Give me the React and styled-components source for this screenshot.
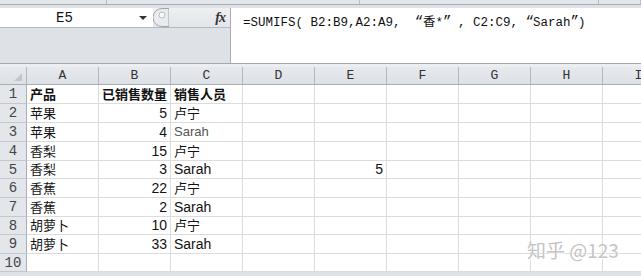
import React from "react";
import styled, { createGlobalStyle } from "styled-components";

const GlobalStyle = createGlobalStyle`
  html, body {
    margin: 0;
    padding: 0;
    background: #ffffff;
    overflow: hidden;
  }
`;

const CJK = `"Noto Sans CJK SC", "Liberation Sans", sans-serif`;
const MONO = `"Liberation Mono", "Noto Sans CJK SC", monospace`;

const Page = styled.div`
  width: 641px;
  height: 276px;
  position: relative;
  overflow: hidden;
  background: #dee1e6;
`;

const TopStrip = styled.div`
  display: flex;
  height: 4px;
  background: #e3e6ea;
  border-bottom: 1px solid #a9aeb6;
`;

const StripCell = styled.div`
  width: ${(p) => p.w}px;
  flex: ${(p) => (p.w ? "none" : 1)};
  border-right: 1px solid #b9bec5;
`;

const FormulaBar = styled.div`
  display: flex;
  padding-top: 3px;
  height: 55px;
  background: #dee1e6;
  border-bottom: 1px solid #a3a8b0;
`;

const LeftPane = styled.div`
  width: 230px;
  display: flex;
  flex-direction: column;
`;

const NameRow = styled.div`
  display: flex;
  height: 19px;
  border-bottom: 1px solid #b4b9c0;
`;

const NameBox = styled.div`
  width: 153px;
  background: #ffffff;
  display: flex;
  align-items: center;
`;

const NameText = styled.span`
  flex: 1;
  text-align: center;
  font-family: ${MONO};
  font-size: 14px;
  color: #111;
  padding-right: 10px;
`;

const Caret = styled.span`
  width: 0;
  height: 0;
  border-left: 4px solid transparent;
  border-right: 4px solid transparent;
  border-top: 4px solid #333;
  margin-right: 6px;
`;

const FxArea = styled.div`
  flex: 1;
  display: flex;
  align-items: center;
  justify-content: space-between;
  background: linear-gradient(#eef0f2, #e2e5e9);
  padding-right: 5px;
`;

const Fx = styled.span`
  font-family: "Liberation Serif", serif;
  font-style: italic;
  font-weight: bold;
  font-size: 14px;
  color: #333;
  letter-spacing: -1px;
`;

const FormulaInput = styled.div`
  flex: 1;
  background: #ffffff;
  border-left: 1px solid #a9aeb6;
  padding: 3px 0 0 12px;
  font-family: ${MONO};
  font-size: 12.5px;
  color: #111;
  white-space: pre;
  height: 52px;
`;

const Quote = styled.span`
  display: inline-block;
  width: ${(p) => (p.$wide ? 15 : 7.5)}px;
  font-family: "Liberation Mono", monospace;
  font-size: 14px;
  text-align: ${(p) => (p.$open ? "right" : "left")};
`;

const Gap = styled.div`
  height: 3px;
  background: #eceef1;
`;

const Grid = styled.div`
  display: grid;
  grid-template-columns: 27px repeat(9, 72px);
  grid-template-rows: 18px;
  grid-auto-rows: auto;
  background: #ffffff;
  font-family: ${CJK};
`;

const HeadCell = styled.div`
  box-sizing: border-box;
  height: 18px;
  background: linear-gradient(#e6e9ed, #dde1e6);
  border-right: 1px solid #b3b8bf;
  border-bottom: 1px solid #a9aeb6;
  display: flex;
  align-items: center;
  justify-content: center;
  font-family: ${MONO};
  font-size: 13px;
  color: #333;
  position: relative;
`;

const CornerMark = styled.span`
  position: absolute;
  right: 4px;
  bottom: 3px;
  width: 0;
  height: 0;
  border-left: 8px solid transparent;
  border-bottom: 8px solid #c3c7cd;
`;

const RowHead = styled.div`
  box-sizing: border-box;
  height: ${(p) => p.h}px;
  background: #e3e6ea;
  border-right: 1px solid #a9aeb6;
  border-bottom: 1px solid #c4c8ce;
  display: flex;
  align-items: center;
  justify-content: center;
  font-family: ${MONO};
  font-size: 14px;
  color: #444;
`;

const Cell = styled.div`
  box-sizing: border-box;
  height: ${(p) => p.h}px;
  border-right: 1px solid #dadcdd;
  border-bottom: 1px solid #dadcdd;
  display: flex;
  align-items: flex-end;
  justify-content: ${(p) => (p.$right ? "flex-end" : "flex-start")};
  padding: 0 3px 1px 3px;
  font-size: ${(p) => (p.$num ? 14 : 13)}px;
  line-height: 16px;
  font-family: ${(p) => (p.$num || p.$light ? `"Liberation Sans", sans-serif` : CJK)};
  font-weight: ${(p) => (p.$bold ? 700 : 400)};
  color: ${(p) => (p.$light ? "#555" : "#111")};
  white-space: nowrap;
`;

const Watermark = styled.div`
  position: absolute;
  left: 527px;
  top: 236px;
  font-family: ${CJK};
  font-size: 19px;
  color: #c4c4c4;
  text-shadow: 0 0 1px #fff, 1px 1px 0 #fff;
`;

const cols = ["A", "B", "C", "D", "E", "F", "G", "H", "I"];
const heights = [19, 19, 19, 19, 18, 19, 19, 18, 19, 18];

const rows = [
  [{ t: "产品", bold: true }, { t: "已销售数量", bold: true }, { t: "销售人员", bold: true }],
  [{ t: "苹果" }, { t: "5", num: true }, { t: "卢宁" }],
  [{ t: "苹果" }, { t: "4", num: true }, { t: "Sarah", light: true }],
  [{ t: "香梨" }, { t: "15", num: true }, { t: "卢宁" }],
  [{ t: "香梨" }, { t: "3", num: true }, { t: "Sarah", num: true, left: true }, null, { t: "5", num: true }],
  [{ t: "香蕉" }, { t: "22", num: true }, { t: "卢宁" }],
  [{ t: "香蕉" }, { t: "2", num: true }, { t: "Sarah", num: true, left: true }],
  [{ t: "胡萝卜" }, { t: "10", num: true }, { t: "卢宁" }],
  [{ t: "胡萝卜" }, { t: "33", num: true }, { t: "Sarah", num: true, left: true }],
  [],
];

function Grip() {
  return (
    <svg width="16" height="19" viewBox="0 0 16 19">
      <path d="M9 0.5 A8.5 8.5 0 0 0 9 18.5 L16 18.5 L16 0.5 Z" fill="#e9ebee" stroke="#9fa5ad" />
      <circle cx="9" cy="7" r="3" fill="#f6f7f8" stroke="#b9bec4" />
    </svg>
  );
}

export default function App() {
  return (
    <>
      <GlobalStyle />
      <Page>
        <TopStrip>
          <StripCell w={106} />
          <StripCell w={252} />
          <StripCell w={238} />
          <StripCell />
        </TopStrip>
        <FormulaBar>
          <LeftPane>
            <NameRow>
              <NameBox>
                <NameText>E5</NameText>
                <Caret />
              </NameBox>
              <FxArea>
                <Grip />
                <Fx>fx</Fx>
              </FxArea>
            </NameRow>
          </LeftPane>
          <FormulaInput>
            =SUMIFS( B2:B9,A2:A9, <Quote $open $wide>“</Quote>香*<Quote $wide>”</Quote>, C2:C9, <Quote $open>“</Quote>Sarah<Quote>”</Quote>)
          </FormulaInput>
        </FormulaBar>
        <Gap />
        <Grid>
          <HeadCell>
            <CornerMark />
          </HeadCell>
          {cols.map((c) => (
            <HeadCell key={c}>{c}</HeadCell>
          ))}
          {rows.map((r, i) => (
            <React.Fragment key={i}>
              <RowHead h={heights[i]}>{i + 1}</RowHead>
              {cols.map((c, j) => {
                const v = r[j];
                return (
                  <Cell
                    key={c}
                    h={heights[i]}
                    $bold={v?.bold}
                    $num={v?.num}
                    $right={v?.num && !v?.left}
                    $light={v?.light}
                  >
                    {v?.t}
                  </Cell>
                );
              })}
            </React.Fragment>
          ))}
        </Grid>
        <Watermark>知乎 @123</Watermark>
      </Page>
    </>
  );
}
